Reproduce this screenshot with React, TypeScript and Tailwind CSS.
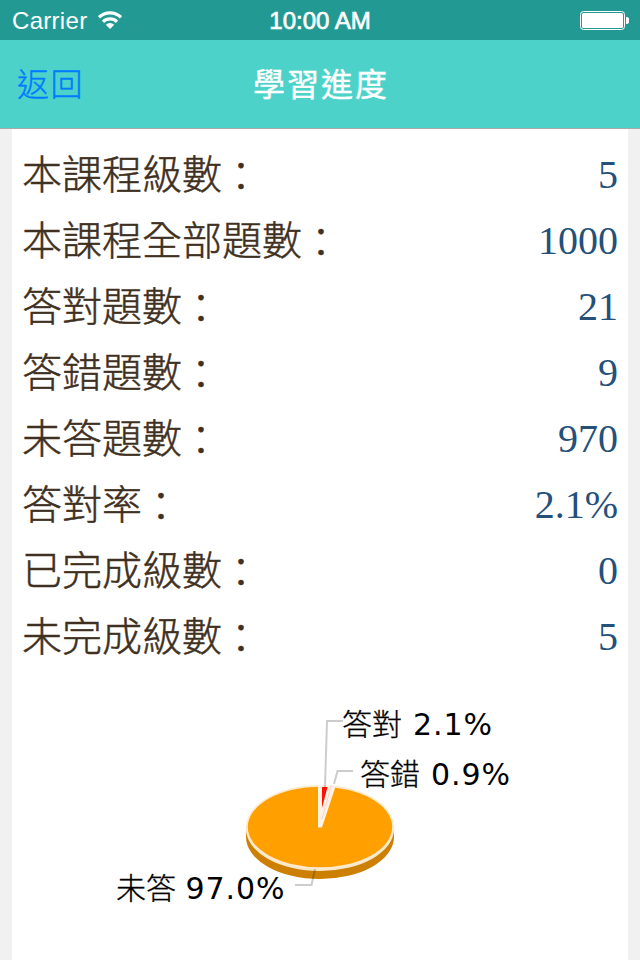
import React from "react";

const stats = [
    { label: "本課程級數", value: "5" },
    { label: "本課程全部題數", value: "1000" },
    { label: "答對題數", value: "21" },
    { label: "答錯題數", value: "9" },
    { label: "未答題數", value: "970" },
    { label: "答對率", value: "2.1%" },
    { label: "已完成級數", value: "0" },
    { label: "未完成級數", value: "5" },
];

function StatusBar() {
    return (
        <div className="relative h-10 bg-[#229a93] flex items-center justify-between pl-3 pr-[11px] text-white text-[24px] leading-10 font-['Liberation_Sans',sans-serif]">
            <div className="flex items-center gap-[11px]">
                <span className="pt-px tracking-[0.3px]">Carrier</span>
                <svg width="24" height="18" viewBox="0 0 24 18" fill="none" stroke="white" strokeWidth="3.2">
                    <path d="M1 6.3a16 16 0 0 1 22 0" />
                    <path d="M5 10.8a10 10 0 0 1 14 0" />
                    <path d="M12 18l-4.2-4.2a6 6 0 0 1 8.4 0z" fill="white" stroke="none" />
                </svg>
            </div>
            <span className="absolute left-0 right-0 top-px text-center [-webkit-text-stroke:0.7px_white]">10:00 AM</span>
            <svg width="49" height="20" viewBox="0 0 49 20">
                <rect x="0.5" y="1.5" width="44" height="18" rx="3" fill="none" stroke="white" />
                <rect x="2" y="3" width="41" height="15" rx="1.5" fill="white" />
                <path d="M46 7a3 3 0 0 1 0 7z" fill="white" />
            </svg>
        </div>
    );
}

function Header() {
    return (
        <header className="h-[89px] bg-[#4dd2c9] border-b border-[#a8aaa8] grid grid-cols-3 items-center px-[17px] pt-[2px] text-[32px]">
            <button className="text-left text-[#007aff] font-light tracking-[1.5px] [-webkit-text-stroke:0.4px_#007aff]">返回</button>
            <h1 className="pl-[2px] text-center text-white font-normal tracking-[2px] whitespace-nowrap [-webkit-text-stroke:0.4px_white]">學習進度</h1>
        </header>
    );
}

function PieChart() {
    return (
        <svg className="block" width="616" height="260" viewBox="12 700 616 260">
            {/* side of the disc */}
            <path d="M246 827v10a74 42 0 0 0 148 0v-10z" fill="#cc7f00" />
            {/* bevel and top */}
            <path d="M246 827v2a74 42 0 0 0 148 0v-2z" fill="#fbe8cb" />
            <ellipse cx="320" cy="827" rx="74" ry="42" fill="#fdebd0" />
            <ellipse cx="320" cy="827" rx="72.2" ry="40.2" fill="#ff9f00" />
            {/* small slices */}
            <path d="M318 785L318 827.5L322 827.5L335.5 786.5L328 785z" fill="#fff3e8" />
            <path d="M322 787L327.5 787L322 808z" fill="#ff0f00" />
            <path d="M331 786L322 819" stroke="#fbd3c4" strokeWidth="1" />
            <g fill="none" stroke="#000" strokeOpacity="0.2" strokeWidth="2">
                <path d="M325 787L327 721H343" />
                <path d="M334 784L337.5 771H353" />
                <path d="M315 869L311.5 885H295" />
            </g>
            <g fontSize="30" className="font-['Noto_Sans_CJK_TC',sans-serif] font-light" stroke="#000" strokeWidth="0.3">
                <text x="342" y="735">答對</text>
                <text x="360" y="785">答錯</text>
                <text x="116" y="899">未答</text>
            </g>
            <g fontSize="30" className="font-['DejaVu_Sans',sans-serif] font-normal" letterSpacing="0.9">
                <text x="413" y="735">2.1%</text>
                <text x="431" y="785">0.9%</text>
                <text x="185.5" y="899">97.0%</text>
            </g>
        </svg>
    );
}

function App() {
    return (
        <div className="w-[640px] h-[960px] overflow-hidden flex flex-col bg-[#f1f1f1] font-['Liberation_Sans','Noto_Sans_CJK_TC',sans-serif]">
            <StatusBar />
            <Header />
            <main className="flex-1 mx-3 bg-white">
                <dl className="pt-[13px] h-[571px]">
                    {stats.map((item) => (
                        <div key={item.label} className="h-[66px] flex items-center justify-between px-[10px] text-[40px]">
                            <dt className="text-[#3f3021] font-light [-webkit-text-stroke:0.5px_#3f3021]">
                                {item.label}<span className="relative top-[2px] left-[-1px]">：</span>
                            </dt>
                            <dd className="text-[#24507a] font-['Liberation_Serif',serif]">{item.value}</dd>
                        </div>
                    ))}
                </dl>
                <PieChart />
            </main>
        </div>
    );
}

export default App;
